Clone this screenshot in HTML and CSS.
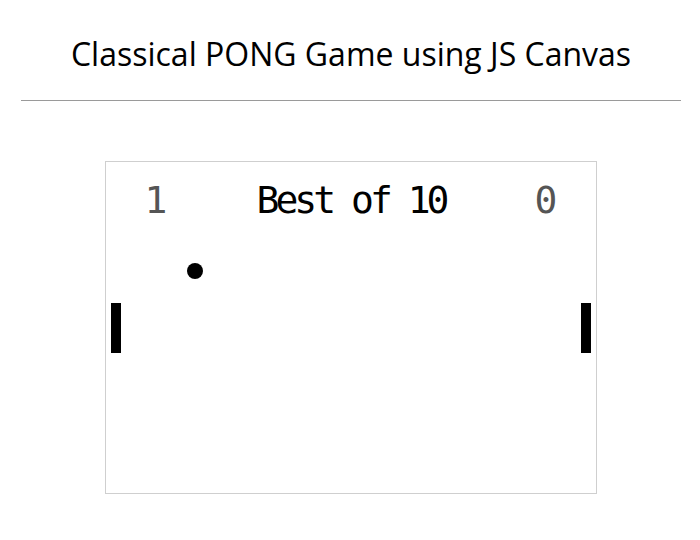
FILE: index.html
```html
<!DOCTYPE html>
<html>
<head>
<meta charset="utf-8">
<title>Classical PONG Game using JS Canvas</title>
<link rel="stylesheet" href="styles.css">
</head>
<body>
<header class="header">
  <h1 class="title">Classical PONG Game using JS Canvas</h1>
  <hr class="rule">
</header>
<main class="board">
  <div class="scores">
    <span class="score">1</span>
    <span class="label">Best of 10</span>
    <span class="score">0</span>
  </div>
  <div class="ball"></div>
  <div class="paddle paddle-left"></div>
  <div class="paddle paddle-right"></div>
</main>
</body>
</html>
```
FILE: styles.css
```css
html, body {
  margin: 0;
  padding: 0;
  background: #fff;
}
body {
  font-family: "Open Sans", sans-serif;
  color: #000;
  padding-left: 2px;
}
.header {
  width: 660px;
  margin: 0 auto;
  padding-top: 35px;
}
.title {
  margin: 0;
  font-size: 32px;
  font-weight: 400;
  line-height: 38px;
  text-align: center;
}
.rule {
  margin: 27px 0 0;
  border: 0;
  border-top: 1px solid #9a9a9a;
  height: 0;
}
.board {
  position: relative;
  width: 490px;
  height: 331px;
  margin: 60px auto 0;
  border: 1px solid #cfcfcf;
}
.scores {
  display: grid;
  grid-template-columns: 100px 1fr 100px;
  padding-top: 18px;
  font-family: "DejaVu Sans Mono", monospace;
  font-size: 38px;
  line-height: 40px;
  text-align: center;
}
.score {
  color: #555;
}
.label {
  color: #000;
  letter-spacing: -4px;
}
.ball {
  position: absolute;
  left: 81px;
  top: 101px;
  width: 16px;
  height: 16px;
  border-radius: 50%;
  background: #000;
}
.paddle {
  position: absolute;
  top: 141px;
  width: 10px;
  height: 50px;
  background: #000;
}
.paddle-left {
  left: 5px;
}
.paddle-right {
  right: 5px;
}
```
